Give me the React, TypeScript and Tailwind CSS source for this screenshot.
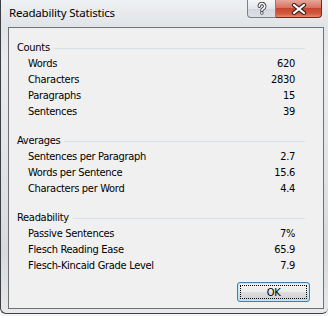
import React from "react";

type Row = { label: string; value: string };

const sections: { title: string; rows: Row[] }[] = [
  {
    title: "Counts",
    rows: [
      { label: "Words", value: "620" },
      { label: "Characters", value: "2830" },
      { label: "Paragraphs", value: "15" },
      { label: "Sentences", value: "39" },
    ],
  },
  {
    title: "Averages",
    rows: [
      { label: "Sentences per Paragraph", value: "2.7" },
      { label: "Words per Sentence", value: "15.6" },
      { label: "Characters per Word", value: "4.4" },
    ],
  },
  {
    title: "Readability",
    rows: [
      { label: "Passive Sentences", value: "7%" },
      { label: "Flesch Reading Ease", value: "65.9" },
      { label: "Flesch-Kincaid Grade Level", value: "7.9" },
    ],
  },
];

const HelpIcon = () => (
  <svg width="12" height="13" viewBox="0 0 12 13">
    <path
      d="M3.3 4.3a2.7 2.7 0 1 1 3.8 2.4c-.9.4-1.2.9-1.2 1.9"
      fill="none"
      stroke="#3b3f46"
      strokeWidth="3.4"
      strokeLinecap="round"
    />
    <path
      d="M3.3 4.3a2.7 2.7 0 1 1 3.8 2.4c-.9.4-1.2.9-1.2 1.9"
      fill="none"
      stroke="#fff"
      strokeWidth="1.6"
      strokeLinecap="round"
    />
    <circle cx="5.9" cy="11" r="1.7" fill="#3b3f46" />
    <circle cx="5.9" cy="11" r="0.9" fill="#fff" />
  </svg>
);

const CloseIcon = () => (
  <svg width="16" height="12" viewBox="0 0 16 12">
    <path
      d="M3 2l10 8M13 2L3 10"
      stroke="#3a2320"
      strokeWidth="4.2"
      strokeLinecap="round"
    />
    <path
      d="M3 2l10 8M13 2L3 10"
      stroke="#fff"
      strokeWidth="2.2"
      strokeLinecap="round"
    />
  </svg>
);

const App = () => {
  return (
    <div className="w-[328px] h-[316px] bg-[#f4f5f6] overflow-hidden">
      <div className="h-[314px] rounded-b-[6px] border-b border-l border-[#3d3f42] bg-[linear-gradient(180deg,#eef0f2_0%,#e2e5e8_8%,#e9ecee_20%,#dfe2e5_60%,#d7dadd_80%,#e6e8ea_100%)] flex flex-col">
        {/* title bar */}
        <div className="h-[27px] flex items-start">
          <div className="pl-[8px] pt-[5px] text-[11.5px] tracking-[-0.2px] leading-[16px] text-black [font-family:'Noto_Sans',sans-serif]">
            Readability Statistics
          </div>
          <div className="ml-auto mr-[6px] flex">
            <div className="w-[29px] h-[18px] flex items-center justify-center rounded-bl-[4px] border border-t-0 border-[#7d8187] bg-[linear-gradient(180deg,#f5f6f7_0%,#e3e6ea_50%,#d2d6dc_51%,#dde1e6_100%)]">
              <HelpIcon />
            </div>
            <div className="w-[46px] h-[18px] flex items-center justify-center rounded-br-[4px] border border-t-0 border-l-0 border-[#6e2a22] bg-[linear-gradient(180deg,#e6a89b_0%,#d8725f_45%,#c7452e_50%,#d35a3e_80%,#e58a68_100%)]">
              <CloseIcon />
            </div>
          </div>
        </div>

        {/* client area */}
        <div className="ml-[7px] w-[316px] h-[282px] border border-[#6f7378] bg-[#f0f0f0] pt-[12px] pl-[8px] flex flex-col text-[11px] tracking-[-0.3px] leading-[16px] text-black [font-family:'DejaVu_Sans_Condensed','Liberation_Sans',sans-serif]">
          {sections.map((s, i) => (
            <div key={s.title} className={i === 0 ? "" : "mt-[13px]"}>
              <div className="flex items-center pr-[18px]">
                <span>{s.title}</span>
                <div className="ml-[4px] flex-1 h-px bg-[#dae1e6]" />
              </div>
              {s.rows.map((r) => (
                <div key={r.label} className="flex pl-[11px] pr-[28px]">
                  <span>{r.label}</span>
                  <span className="ml-auto">{r.value}</span>
                </div>
              ))}
            </div>
          ))}
          <div className="mt-[8px] flex justify-end pr-[13px]">
            <button className="w-[73px] h-[20px] rounded-[3px] border border-[#3c7fb1] bg-[linear-gradient(180deg,#f2f2f2_0%,#ebebeb_50%,#dddddd_51%,#cfcfcf_100%)] p-[2px] shadow-[inset_0_0_0_1px_#bfe6fa]">
              <div className="h-full border border-dotted border-black flex items-center justify-center text-[11px] leading-none">
                OK
              </div>
            </button>
          </div>
        </div>
      </div>
    </div>
  );
};

export default App;
